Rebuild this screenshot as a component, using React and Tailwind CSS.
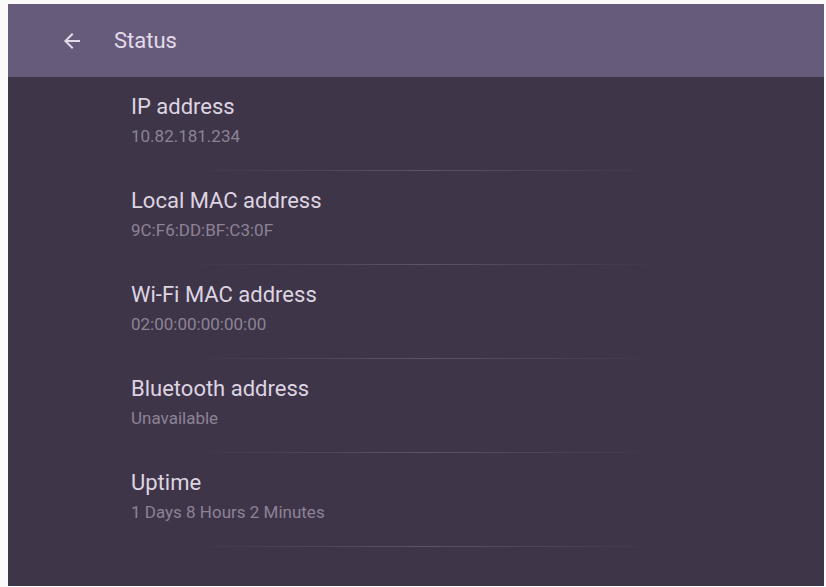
import { MdArrowBack } from 'react-icons/md';

const items = [
  { title: 'IP address', value: '10.82.181.234' },
  { title: 'Local MAC address', value: '9C:F6:DD:BF:C3:0F' },
  { title: 'Wi-Fi MAC address', value: '02:00:00:00:00:00' },
  { title: 'Bluetooth address', value: 'Unavailable' },
  { title: 'Uptime', value: '1 Days 8 Hours 2 Minutes' },
];

export default function App() {
  return (
    <div className="w-[826px] h-[587px] bg-[#fbfafb] pl-[8px] pt-[4px] overflow-hidden" style={{ fontFamily: 'Roboto, "Noto Sans", sans-serif' }}>
      <div className="w-[816px] h-[582px] bg-[#3f3548] flex flex-col">
        <header className="h-[73px] bg-[#675b7b] flex items-center shrink-0">
          <MdArrowBack className="ml-[52px] w-[24px] h-[24px] text-[#e4dbea]" />
          <h1 className="ml-[30px] text-[22px] leading-[28px] text-[#e4dbea]">Status</h1>
        </header>
        <div className="flex flex-col">
          {items.map((it) => (
            <div key={it.title} className="h-[94px] flex flex-col pl-[123px]">
              <p className="pt-[16px] text-[22px] leading-[28px] text-[#ddd4e2]">{it.title}</p>
              <p className="mt-[4px] text-[17px] leading-[22px] text-[#8c8396]">{it.value}</p>
              <div className="mt-auto ml-[55px] w-[475px] h-px bg-gradient-to-r from-transparent via-[#5d5369] to-transparent" />
            </div>
          ))}
        </div>
      </div>
    </div>
  );
}
